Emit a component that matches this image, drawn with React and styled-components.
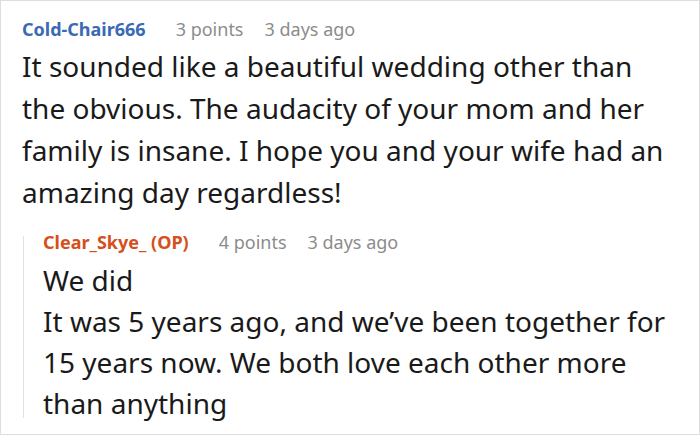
import React from "react";
import styled, { createGlobalStyle } from "styled-components";

const Global = createGlobalStyle`
  html, body { margin: 0; padding: 0; background: #fff; }
  body { font-family: "Noto Sans", "Open Sans", sans-serif; }
`;

const Frame = styled.div`
  box-sizing: border-box;
  width: 700px;
  height: 435px;
  border: 1px solid #dedede;
  padding: 16px 8px 0 21px;
  overflow: hidden;
`;

const Comment = styled.div`
  display: flex;
  flex-direction: column;
`;

const Meta = styled.div`
  display: flex;
  align-items: baseline;
  gap: 21px;
  font-size: 18px;
  line-height: 24px;
`;

const Author = styled.span`
  font-weight: 700;
  color: ${(p) => p.$color};
  margin-right: 9px;
`;

const Info = styled.span`
  color: #8c8c8c;
`;

const Body = styled.p`
  margin: 0;
  font-size: 28px;
  line-height: ${(p) => p.$lh}px;
  color: #1a1a1a;
  padding-top: ${(p) => p.$top}px;
  max-width: ${(p) => p.$max}px;
`;

const Replies = styled.div`
  position: relative;
  margin-top: 17px;
  padding-left: 21px;
  &::before {
    content: "";
    position: absolute;
    left: 1px;
    top: 6px;
    bottom: 6px;
    width: 1px;
    background: #e2e2e2;
  }
`;

export default function App() {
  return (
    <>
      <Global />
      <Frame>
        <Comment>
          <Meta>
            <Author $color="#3a6ab3">Cold-Chair666</Author>
            <Info>3 points</Info>
            <Info>3 days ago</Info>
          </Meta>
          <Body $lh={42} $top={4} $max={660}>
            It sounded like a beautiful wedding other than the obvious. The audacity of your mom and her family is insane. I hope you and your wife had an amazing day regardless!
          </Body>
          <Replies>
            <Comment>
              <Meta>
                <Author $color="#d5501c">Clear_Skye_ (OP)</Author>
                <Info>4 points</Info>
                <Info>3 days ago</Info>
              </Meta>
              <Body $lh={41} $top={6} $max={660}>
                We did
                <br />
                It was 5 years ago, and we’ve been together for 15 years now. We both love each other more than anything
              </Body>
            </Comment>
          </Replies>
        </Comment>
      </Frame>
    </>
  );
}
